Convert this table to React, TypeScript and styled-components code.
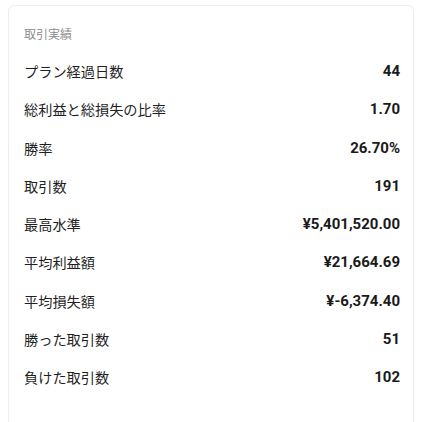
import React from "react";
import styled, { createGlobalStyle } from "styled-components";

const Global = createGlobalStyle`
  html, body { margin: 0; padding: 0; background: #fff; }
  body { font-family: "Noto Sans CJK JP", "Noto Sans", sans-serif; }
`;

const Page = styled.div`
  padding: 5px 8px 0 8px;
`;

const Card = styled.section`
  border: 1px solid #ececec;
  border-radius: 6px;
  background: #fff;
  padding: 18px 13px 40px 15px;
`;

const Title = styled.h3`
  margin: 0 0 8px 0;
  font-size: 12px;
  line-height: 20px;
  font-weight: 400;
  color: #8c8c8c;
`;

const Row = styled.div`
  display: flex;
  align-items: center;
  justify-content: space-between;
  height: 38.25px;
`;

const Label = styled.span`
  font-size: 14.2px;
  color: #1f1f1f;
  font-family: "Noto Sans CJK JP", sans-serif;
`;

const Value = styled.span`
  font-size: 15px;
  font-weight: 700;
  color: #1a1a1a;
  font-family: Roboto, "Liberation Sans", sans-serif;
`;

const rows: [string, string][] = [
  ["プラン経過日数", "44"],
  ["総利益と総損失の比率", "1.70"],
  ["勝率", "26.70%"],
  ["取引数", "191"],
  ["最高水準", "¥5,401,520.00"],
  ["平均利益額", "¥21,664.69"],
  ["平均損失額", "¥-6,374.40"],
  ["勝った取引数", "51"],
  ["負けた取引数", "102"],
];

export default function App() {
  return (
    <Page>
      <Global />
      <Card>
        <Title>取引実績</Title>
        {rows.map(([l, v]) => (
          <Row key={l}>
            <Label>{l}</Label>
            <Value>{v}</Value>
          </Row>
        ))}
      </Card>
    </Page>
  );
}
